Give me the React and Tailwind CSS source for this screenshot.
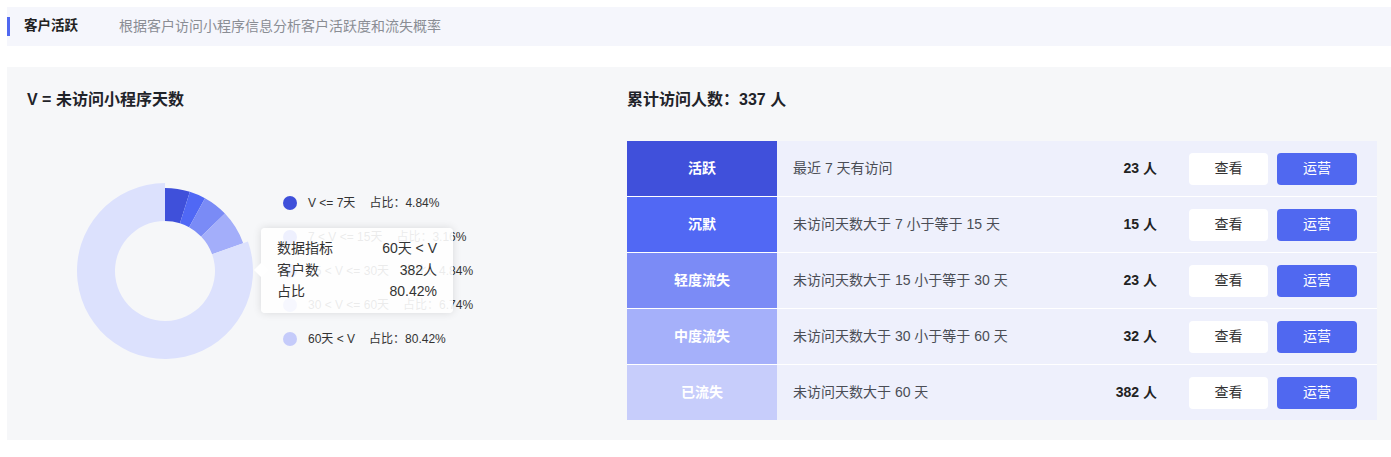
import React from 'react';

const segments = [
  { label: 'V <= 7天', pct: 4.84, color: '#3f50da', dot: '#3f50da' },
  { label: '7 < V <= 15天', pct: 3.16, color: '#5068f5', dot: '#5068f5' },
  { label: '15 < V <= 30天', pct: 4.84, color: '#7a8bf6', dot: '#7a8bf6' },
  { label: '30 < V <= 60天', pct: 6.74, color: '#a3aefa', dot: '#a3aefa' },
  { label: '60天 < V', pct: 80.42, color: '#dce1fd', dot: '#c5cbfa' },
];

const rows = [
  { name: '活跃', desc: '最近 7 天有访问', count: '23 人', bg: 'bg-[#4050db]' },
  { name: '沉默', desc: '未访问天数大于 7 小于等于 15 天', count: '15 人', bg: 'bg-[#5168f4]' },
  { name: '轻度流失', desc: '未访问天数大于 15 小于等于 30 天', count: '23 人', bg: 'bg-[#7b8bf6]' },
  { name: '中度流失', desc: '未访问天数大于 30 小于等于 60 天', count: '32 人', bg: 'bg-[#a5b0fa]' },
  { name: '已流失', desc: '未访问天数大于 60 天', count: '382 人', bg: 'bg-[#c7cdfb]' },
];

// donut slice path, angles in degrees from 12 o'clock, clockwise
const slice = (cx, cy, r0, r1, a0, a1) => {
  const pt = (r, a) => {
    const rad = ((a - 90) * Math.PI) / 180;
    return [cx + r * Math.cos(rad), cy + r * Math.sin(rad)];
  };
  const large = a1 - a0 > 180 ? 1 : 0;
  const [x1, y1] = pt(r1, a0);
  const [x2, y2] = pt(r1, a1);
  const [x3, y3] = pt(r0, a1);
  const [x4, y4] = pt(r0, a0);
  return `M${x1} ${y1} A${r1} ${r1} 0 ${large} 1 ${x2} ${y2} L${x3} ${y3} A${r0} ${r0} 0 ${large} 0 ${x4} ${y4} Z`;
};

const Donut = () => {
  let acc = 0;
  return (
    <svg width="180" height="180" viewBox="0 0 180 180" className="shrink-0">
      {segments.map((s, i) => {
        const a0 = (acc / 100) * 360;
        acc += s.pct;
        const a1 = (acc / 100) * 360;
        const outer = i === 4 ? 88 : 83;
        return <path key={i} d={slice(90, 90, 50, outer, a0, a1)} fill={s.color} />;
      })}
    </svg>
  );
};

const App = () => {
  return (
    <div className="min-h-[457px] bg-white pt-[7px] pl-[7px] text-[#222] font-['Liberation_Sans','Noto_Sans_CJK_SC',sans-serif]">
      {/* Header */}
      <div className="h-[39px] bg-[#f5f6fc] flex items-center">
        <div className="w-[3px] h-[19px] bg-[#5068f0]" />
        <span className="ml-[14px] text-[13.5px] font-bold text-[#222]">客户活跃</span>
        <span className="ml-[41px] text-[14px] text-[#8a8d94]">根据客户访问小程序信息分析客户活跃度和流失概率</span>
      </div>

      {/* Panel */}
      <div className="mt-[21px] bg-[#f6f7f9] flex pt-[20px] pb-[20px]">
        {/* Left */}
        <div className="w-[620px] pl-[20px] shrink-0">
          <h2 className="h-[26px] leading-[26px] text-[16px] font-bold text-[#1f2329]">V = 未访问小程序天数</h2>
          <div className="relative mt-[68px] flex items-center pl-[48px]">
            <Donut />
            <div className="ml-[28px] flex flex-col">
              {segments.map((s, i) => (
                <div key={i} className="h-[34px] flex items-center text-[12px] text-[#333]">
                  <span className="w-[14px] h-[14px] rounded-full" style={{ background: s.dot }} />
                  <span className="ml-[11px]">{s.label}</span>
                  <span className="ml-[14px]">占比：{s.pct.toFixed(2)}%</span>
                </div>
              ))}
            </div>

            {/* Tooltip */}
            <div className="absolute left-[234px] top-[47px] w-[192px] h-[85px] bg-white/90 rounded-[4px] shadow-[0_0_8px_rgba(0,0,0,0.12)] px-[16px] flex flex-col justify-center text-[14px] text-[#333]">
              <div className="absolute -left-[5px] top-[37px] w-[10px] h-[10px] bg-white rotate-45" />
              <div className="flex justify-between leading-[21.5px]"><span>数据指标</span><span>60天 &lt; V</span></div>
              <div className="flex justify-between leading-[21.5px]"><span>客户数</span><span>382人</span></div>
              <div className="flex justify-between leading-[21.5px]"><span>占比</span><span>80.42%</span></div>
            </div>
          </div>
        </div>

        {/* Right */}
        <div className="flex-1 pr-[14px]">
          <h2 className="h-[26px] leading-[26px] text-[16px] font-bold text-[#1f2329]">累计访问人数：337 人</h2>
          <div className="mt-[28px] flex flex-col gap-[1px] bg-white">
            {rows.map((r) => (
              <div key={r.name} className="h-[55px] flex items-center bg-[#eef0fc]">
                <div className={`w-[150px] h-full flex items-center justify-center text-[14px] font-bold text-white ${r.bg}`}>
                  {r.name}
                </div>
                <div className="ml-[16px] flex-1 text-[14px] text-[#4a4d55]">{r.desc}</div>
                <div className="text-[14px] font-bold text-[#222]">{r.count}</div>
                <button className="ml-[32px] w-[79px] h-[32px] rounded-[4px] bg-white text-[14px] text-[#333]">查看</button>
                <button className="ml-[9px] mr-[20px] w-[80px] h-[32px] rounded-[4px] bg-[#5068f0] text-[14px] text-white">运营</button>
              </div>
            ))}
          </div>
        </div>
      </div>
    </div>
  );
};

export default App;
